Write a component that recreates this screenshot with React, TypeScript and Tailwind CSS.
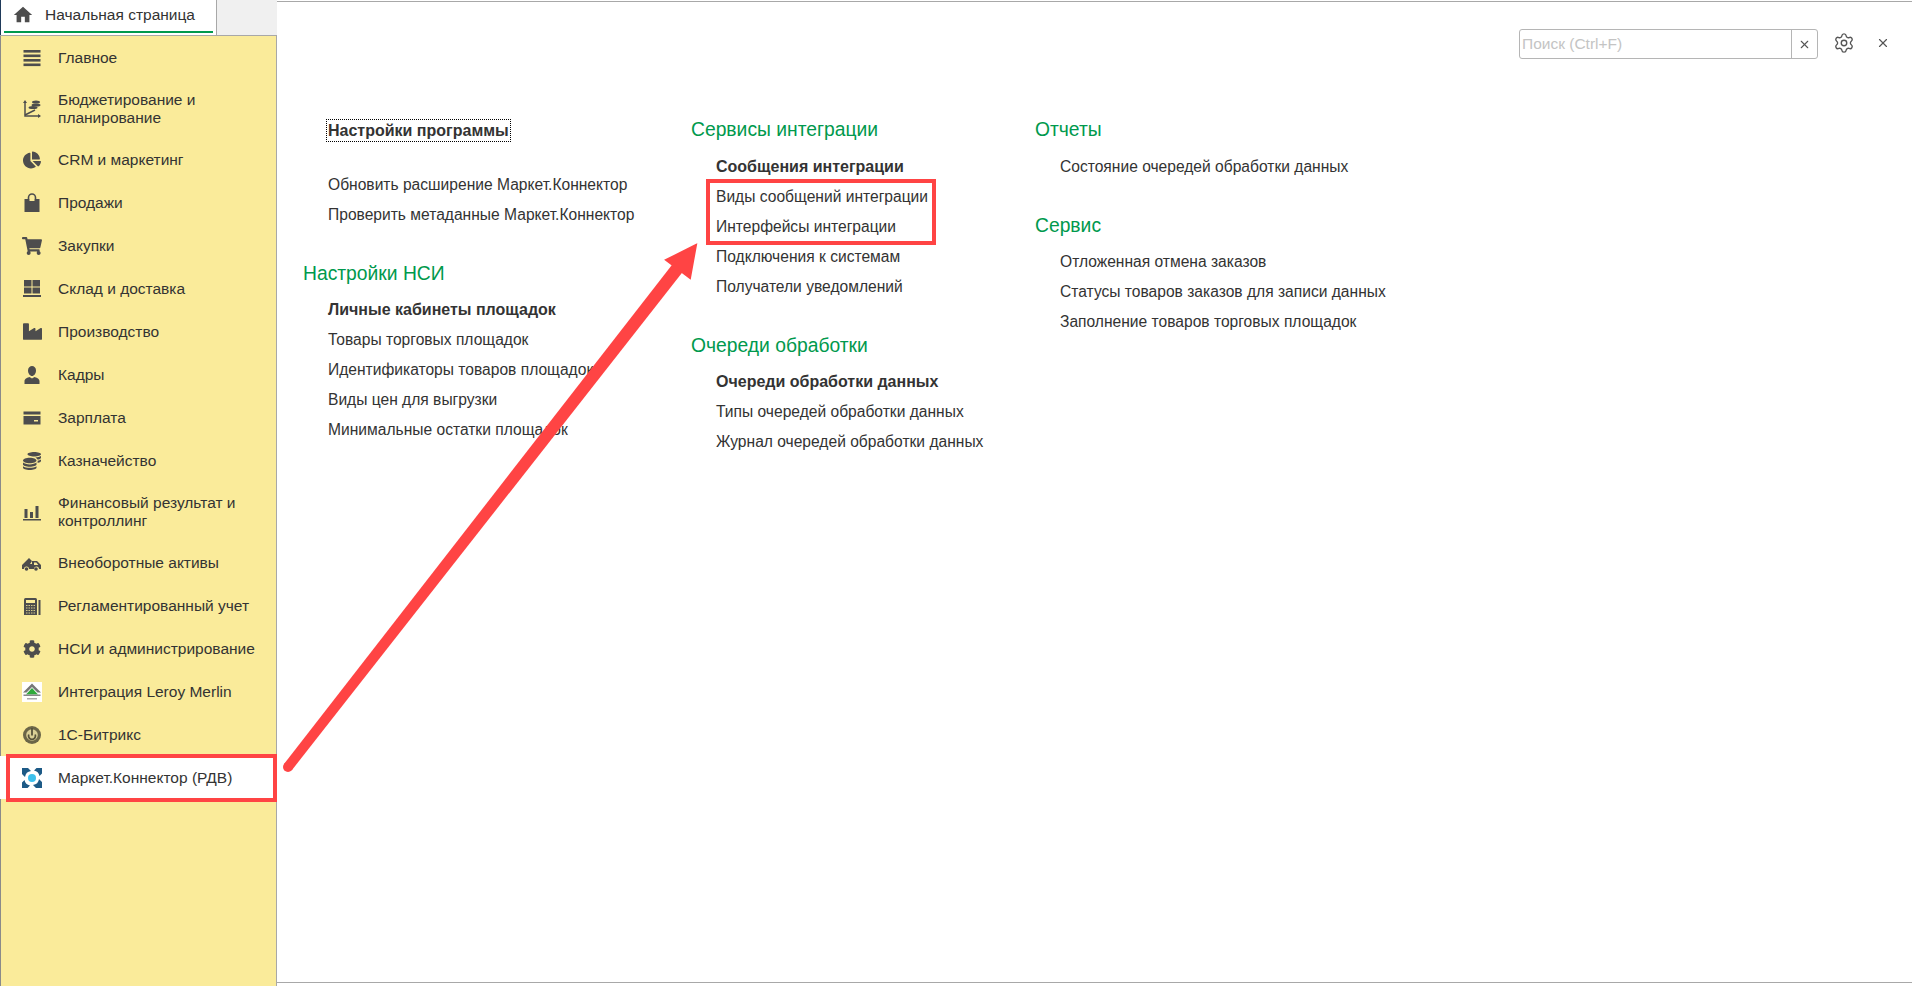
import React from "react";
import { FaChartPie, FaShoppingCart, FaIndustry, FaCog, FaCoins } from "react-icons/fa";
import { MdHome } from "react-icons/md";
import { Settings, X } from "lucide-react";

const c = "#4d4d4d";
const Box = ({ children }: { children: React.ReactNode }) => (
  <svg width="20" height="20" viewBox="0 0 20 20" fill={c}>{children}</svg>
);

const Menu = () => <Box><rect x="1.5" y="2" width="17" height="2.6"/><rect x="1.5" y="6.5" width="17" height="2.6"/><rect x="1.5" y="11" width="17" height="2.6"/><rect x="1.5" y="15.5" width="17" height="2.6"/></Box>;
const Budget = () => <Box><path d="M3 3v14h15" fill="none" stroke={c} strokeWidth="1.5"/><path d="M3 1l2 3H1zM19 17l-3 2v-4z"/><path d="M3 16L13 11" stroke={c} strokeWidth="1.5"/><ellipse cx="14" cy="3" rx="4" ry="1.6"/><ellipse cx="14" cy="6" rx="4.5" ry="1.6"/><ellipse cx="11" cy="8.5" rx="4.5" ry="1.6"/></Box>;
const Bag = () => <Box><path d="M2.5 6h15v13h-15z"/><path d="M6.5 7V4.5a3.5 3.5 0 017 0V7" fill="none" stroke={c} strokeWidth="1.6"/><path d="M7.5 6h5v2h-5z" fill="#faeb9a"/></Box>;
const Grid = () => <Box><rect x="2" y="1" width="7.5" height="6.5"/><rect x="10.5" y="1" width="7.5" height="6.5"/><rect x="2" y="8.5" width="7.5" height="6"/><rect x="10.5" y="8.5" width="7.5" height="6"/><rect x="1" y="16" width="18" height="2"/></Box>;
const Person = () => <Box><path d="M6 5.500C6 2.500 8 1 10 1s4 1.500 4 4.500S12 11 10 11 6 8.500 6 5.500z"/><path d="M2.500 19v-3c0-2.500 3.500-3.500 5-4l2.500 1.500 2.500-1.500c1.500.5 5 1.500 5 4v3z"/></Box>;
const Card = () => <Box><path d="M1.500 3.500h17v3h-17z"/><path d="M1.500 8h17v8.500h-17z"/><rect x="12" y="12" width="4" height="1.500" fill="#faeb9a"/></Box>;
const Bars = () => <Box><rect x="2.500" y="7" width="3" height="9"/><rect x="8" y="10" width="3" height="6"/><rect x="13.500" y="4" width="3" height="12"/><rect x="1" y="17" width="18" height="1.500"/></Box>;
const Truck = () => <Box><path d="M0 12l7-7 3 3-2 3h2V8h5l4 4v4h-2a2.500 2.500 0 00-5 0H7a2.500 2.500 0 00-5 0H0z"/><circle cx="4.500" cy="16" r="1.800"/><circle cx="14" cy="16" r="1.800"/><path d="M12 9.500h2.300l2 2.500H12z" fill="#faeb9a"/></Box>;
const Calc = () => <Box><path d="M2 3.500Q2 2 3.500 2h10Q15 2 15 3.500V19H2z"/><rect x="4" y="4" width="9" height="3" fill="#faeb9a"/><path d="M4 9.500h9M4 12h9M4 14.500h9M4 17h9" stroke="#faeb9a" strokeWidth=".8" strokeDasharray="1.500 1"/><rect x="16.500" y="4" width="2" height="15"/></Box>;
const Leroy = () => (
  <svg width="20" height="20" viewBox="0 0 20 20"><rect width="20" height="20" fill="#fff"/><path d="M10 1.500L1 10.500h3.500L10 5l5.500 5.500H19z" fill="#777"/><path d="M10 6L4 12.500h12z" fill="#2faa3c"/><rect x="1.500" y="12.500" width="17" height="1.500" fill="#888"/><rect x="5" y="16" width="10" height="1.500" fill="#aaa"/></svg>
);
const Bitrix = () => (
  <svg width="20" height="20" viewBox="0 0 20 20"><circle cx="10" cy="10" r="9" fill="#6b6647"/><circle cx="10" cy="10" r="5.800" fill="#d9cf95"/><path d="M10 3v7.500M6.800 9.500a3.500 3.500 0 106.400 0" fill="none" stroke="#55513a" strokeWidth="1.800"/></svg>
);
const Market = () => (
  <svg width="20" height="20" viewBox="0 0 20 20"><path d="M0 0h6l3 3a7 7 0 00-6 6L0 6zM20 20h-6l-3-3a7 7 0 006-6l3 3zM12 2.500a7 7 0 015.500 5.500L20 5.500V0h-5.500zM8 17.500A7 7 0 012.500 12L0 14.500V20h5.500z" fill="#1d5a86"/><circle cx="10" cy="10" r="4" fill="#3cc0ec"/></svg>
);

const items: { t: React.ReactNode; i: React.ReactNode; h?: string; active?: boolean }[] = [
  { t: "Главное", i: <Menu /> },
  { t: <>Бюджетирование и<br />планирование</>, i: <Budget />, h: "h-[59px]" },
  { t: "CRM и маркетинг", i: <FaChartPie size={18} color={c} /> },
  { t: "Продажи", i: <Bag /> },
  { t: "Закупки", i: <FaShoppingCart size={20} color={c} /> },
  { t: "Склад и доставка", i: <Grid /> },
  { t: "Производство", i: <FaIndustry size={19} color={c} /> },
  { t: "Кадры", i: <Person /> },
  { t: "Зарплата", i: <Card /> },
  { t: "Казначейство", i: <FaCoins size={18} color={c} /> },
  { t: <>Финансовый результат и<br />контроллинг</>, i: <Bars />, h: "h-[59px]" },
  { t: "Внеоборотные активы", i: <Truck /> },
  { t: "Регламентированный учет", i: <Calc /> },
  { t: "НСИ и администрирование", i: <FaCog size={18} color={c} /> },
  { t: "Интеграция Leroy Merlin", i: <Leroy /> },
  { t: "1С-Битрикс", i: <Bitrix /> },
  { t: "Маркет.Коннектор (РДВ)", i: <Market />, active: true },
];

const Heading = ({ children, cls }: { children: React.ReactNode; cls?: string }) => (
  <div className={`text-[19.3px] leading-[22px] text-[#00994d] ${cls ?? ""}`}>{children}</div>
);
const Link = ({ children, bold }: { children: React.ReactNode; bold?: boolean }) => (
  <div className={`h-[30px] pl-[25px] leading-[30px] whitespace-nowrap text-[#333] ${bold ? "text-[16px] font-bold" : "text-[15.6px]"}`}>{children}</div>
);

export default function App() {
  return (
    <div className="relative flex h-[986px] w-[1912px] overflow-hidden bg-white font-['Liberation_Sans',Arial,sans-serif] text-[#333]">
      <aside className="flex w-[277px] shrink-0 flex-col">
        <div className="flex h-[36px] shrink-0 border-b border-[#a8a8a8] bg-[#f0f0f0]">
          <div className="relative flex w-[217px] items-start border-l border-r border-l-[#1f3a5a] border-r-[#a8a8a8] bg-white pl-[11px]">
            <MdHome size={22} color={c} className="mt-[4px]" />
            <span className="ml-[11px] mt-[6px] text-[15.5px] leading-[18px]">Начальная страница</span>
            <div className="absolute bottom-[2px] left-[3px] h-[2px] w-[209px] bg-[#00994d]" />
          </div>
        </div>
        <nav className="flex flex-1 flex-col border-l border-r border-l-[#8a8a8a] border-r-[#a8a8a8] bg-[#faeb9a]">
          {items.map((it, n) => (
            <div key={n} className={`flex ${it.h ?? "h-[43px]"} shrink-0 items-center pl-[21px] ${it.active ? "-ml-px bg-white pl-[22px]" : ""}`}>
              <span className="flex w-[20px] shrink-0 justify-center">{it.i}</span>
              <span className="ml-[16px] text-[15.5px] leading-[18px]">{it.t}</span>
            </div>
          ))}
        </nav>
      </aside>

      <main className="relative flex-1">
        <div className="absolute inset-x-0 bottom-[3px] top-[1px] border-b border-t border-[#a8a8a8]" />
        <div className="relative flex h-[57px] items-start justify-end pt-[29px]">
          <div className="flex h-[30px] w-[299px] rounded-[3px] border border-[#b5b5b5]">
            <span className="flex-1 pl-[2px] text-[15.5px] leading-[28px] text-[#c4c4c4]">Поиск (Ctrl+F)</span>
            <span className="flex w-[26px] items-center justify-center border-l border-[#b5b5b5]"><X size={13} color="#555" /></span>
          </div>
          <span className="ml-[15px] mt-[3px]"><Settings size={22} color="#555" strokeWidth={1.5} /></span>
          <span className="ml-[21px] mr-[22px] mt-[7px]"><X size={14} color="#555" /></span>
        </div>

        <div className="relative flex pt-[61px]">
          <section className="ml-[26px] w-[388px]">
            <div className="h-[52px] pl-[25px] pt-px">
              <span className="-ml-[2px] inline-block border border-dotted border-black px-px text-[16px] font-bold leading-[21px]">Настройки программы</span>
            </div>
            <Link>Обновить расширение Маркет.Коннектор</Link>
            <Link>Проверить метаданные Маркет.Коннектор</Link>
            <Heading cls="mt-[33px] mb-[10px]">Настройки НСИ</Heading>
            <Link bold>Личные кабинеты площадок</Link>
            <Link>Товары торговых площадок</Link>
            <Link>Идентификаторы товаров площадок</Link>
            <Link>Виды цен для выгрузки</Link>
            <Link>Минимальные остатки площадок</Link>
          </section>
          <section className="w-[344px] pt-px">
            <Heading cls="mb-[11px]">Сервисы интеграции</Heading>
            <Link bold>Сообщения интеграции</Link>
            <Link>Виды сообщений интеграции</Link>
            <Link>Интерфейсы интеграции</Link>
            <Link>Подключения к системам</Link>
            <Link>Получатели уведомлений</Link>
            <Heading cls="mt-[33px] mb-[10px]">Очереди обработки</Heading>
            <Link bold>Очереди обработки данных</Link>
            <Link>Типы очередей обработки данных</Link>
            <Link>Журнал очередей обработки данных</Link>
          </section>
          <section className="pt-px">
            <Heading cls="mb-[11px]">Отчеты</Heading>
            <Link>Состояние очередей обработки данных</Link>
            <Heading cls="mt-[33px] mb-[10px]">Сервис</Heading>
            <Link>Отложенная отмена заказов</Link>
            <Link>Статусы товаров заказов для записи данных</Link>
            <Link>Заполнение товаров торговых площадок</Link>
          </section>
        </div>
      </main>

      {/* annotations drawn over the page */}
      <div className="absolute left-[6px] top-[754px] h-[48px] w-[271px] border-[4px] border-[#ff4444]" />
      <div className="absolute left-[706px] top-[179px] h-[66px] w-[230px] border-[4px] border-[#ff4444]" />
      <svg className="absolute left-0 top-0" width="1912" height="986" fill="#ff4444">
        <circle cx="288" cy="767" r="5" />
        <path d="M284 764L675 261L685 269L292 770Z" />
        <path d="M696 245L666 260L690 278Z" stroke="#ff4444" strokeWidth="2" />
      </svg>
    </div>
  );
}
